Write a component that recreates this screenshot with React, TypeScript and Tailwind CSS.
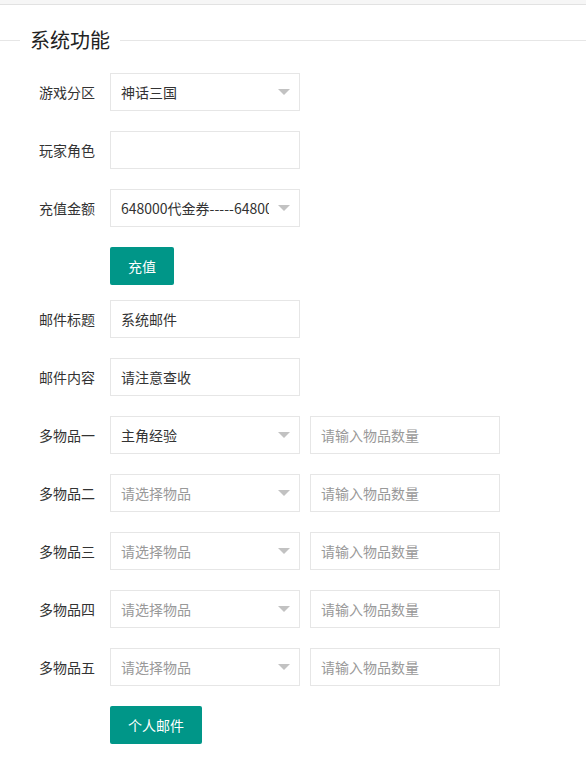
import React from "react";

const font = { fontFamily: '"Noto Sans CJK SC", "Noto Sans", sans-serif' };

function Label({ children }: { children: React.ReactNode }) {
    return (
        <label className="w-[110px] shrink-0 pr-[15px] text-right text-[14px] leading-[20px] text-[#333]">
            {children}
        </label>
    );
}

function Select({ value, placeholder }: { value?: string; placeholder?: string }) {
    return (
        <div className="relative flex h-[38px] w-[190px] items-center border border-[#e6e6e6] bg-white pl-[10px] pr-[30px]">
            <span
                className={
                    "min-w-0 flex-1 overflow-hidden whitespace-nowrap text-[14px] " +
                    (value ? "text-[#333]" : "text-[#999]")
                }
            >
                {value ?? placeholder}
            </span>
            <span className="absolute right-[9px] top-[15px] h-0 w-0 border-x-[6px] border-t-[6px] border-x-transparent border-t-[#c2c2c2]"></span>
        </div>
    );
}

function Input({ value, placeholder }: { value?: string; placeholder?: string }) {
    return (
        <div className="flex h-[38px] w-[190px] items-center border border-[#e6e6e6] bg-white pl-[10px]">
            <span
                className={
                    "whitespace-nowrap text-[14px] " +
                    (value ? "text-[#333]" : "text-[#999]")
                }
            >
                {value ?? placeholder}
            </span>
        </div>
    );
}

function Row({ label, children }: { label: string; children: React.ReactNode }) {
    return (
        <div className="mb-[20px] flex h-[38px] items-center">
            <Label>{label}</Label>
            <div className="flex gap-[10px]">{children}</div>
        </div>
    );
}

function Btn({ children, last }: { children: React.ReactNode; last?: boolean }) {
    return (
        <div className={"flex pl-[110px] " + (last ? "" : "mb-[15px]")}>
            <button className="h-[38px] rounded-[2px] bg-[#009688] px-[18px] text-[14px] text-white">
                {children}
            </button>
        </div>
    );
}

export default function App() {
    const items = ["一", "二", "三", "四", "五"];

    return (
        <div className="min-h-[767px] bg-white" style={font}>
            <div className="h-[5px] border-b border-[#e2e2e2] bg-[#f6f6f6]"></div>

            {/* fieldset title */}
            <div className="mt-[24px] flex items-center">
                <div className="w-[20px] border-t border-[#e6e6e6]"></div>
                <span className="px-[10px] text-[20px] font-normal leading-[22px] text-[#222]">
                    系统功能
                </span>
                <div className="flex-1 border-t border-[#e6e6e6]"></div>
            </div>

            <div className="mt-[22px]">
                <Row label="游戏分区">
                    <Select value="神话三国" />
                </Row>
                <Row label="玩家角色">
                    <Input />
                </Row>
                <Row label="充值金额">
                    <Select value="648000代金券-----648000元" />
                </Row>
                <Btn>充值</Btn>

                <Row label="邮件标题">
                    <Input value="系统邮件" />
                </Row>
                <Row label="邮件内容">
                    <Input value="请注意查收" />
                </Row>
                {items.map((n, i) => (
                    <Row key={n} label={"多物品" + n}>
                        {i === 0 ? (
                            <Select value="主角经验" />
                        ) : (
                            <Select placeholder="请选择物品" />
                        )}
                        <Input placeholder="请输入物品数量" />
                    </Row>
                ))}
                <Btn last>个人邮件</Btn>
            </div>
        </div>
    );
}
